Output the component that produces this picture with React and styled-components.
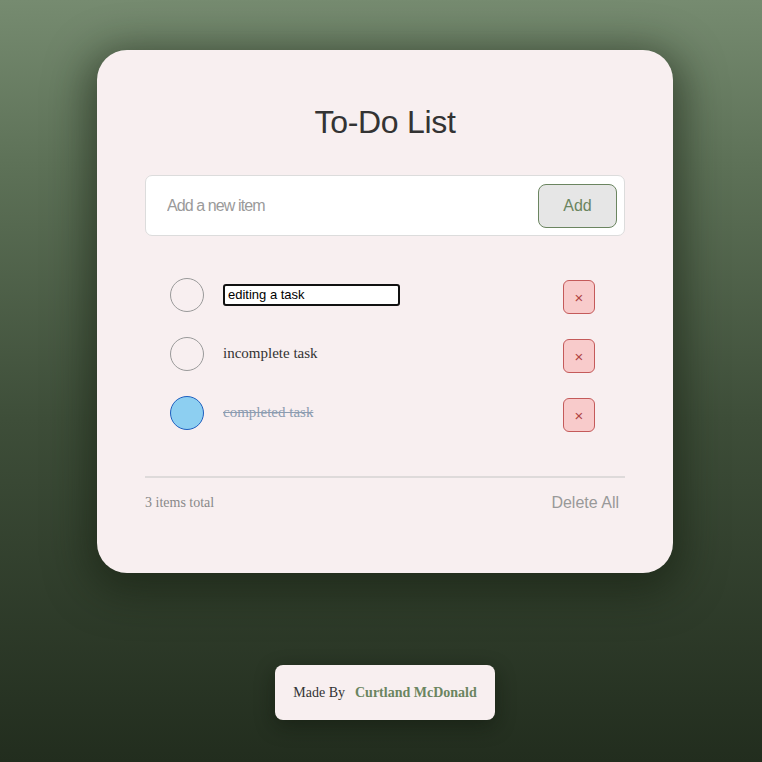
import React, { useState } from 'react';
import styled, { createGlobalStyle } from 'styled-components';

const GlobalStyle = createGlobalStyle`
    html, body {
        margin: 0;
        padding: 0;
    }
    body {
        min-height: 762px;
        background: linear-gradient(180deg, #768b70 0%, #5d7157 22%, #3e4e39 55%, #222d1e 100%);
        font-family: 'Liberation Serif', 'Times New Roman', serif;
    }
`;

const Page = styled.div`
    display: flex;
    flex-direction: column;
    align-items: center;
    padding: 50px 0 0 8px;
    min-height: 762px;
    box-sizing: border-box;
`;

const Card = styled.div`
    width: 576px;
    box-sizing: border-box;
    padding: 54px 48px 60px;
    background: #f8eff0;
    border-radius: 30px;
    box-shadow: 0 10px 40px 10px rgba(20, 30, 15, 0.55);
`;

const Title = styled.h1`
    margin: 0 0 34px;
    text-align: center;
    font-family: 'Liberation Sans', Arial, sans-serif;
    font-weight: 400;
    font-size: 32px;
    letter-spacing: -0.3px;
    color: #333;
`;

const InputBar = styled.form`
    display: flex;
    align-items: center;
    height: 61px;
    box-sizing: border-box;
    padding: 0 7px 0 21px;
    background: #fff;
    border: 1px solid #dcdcdc;
    border-radius: 7px;
`;

const NewItem = styled.input`
    flex: 1;
    border: none;
    outline: none;
    background: transparent;
    font-family: 'Liberation Sans', Arial, sans-serif;
    font-size: 16px;
    letter-spacing: -0.9px;
    color: #333;
    padding: 0;

    &::placeholder {
        color: #9a9a9a;
    }
`;

const AddButton = styled.button`
    width: 79px;
    height: 44px;
    background: #e6e6e6;
    border: 1px solid #6b8560;
    border-radius: 8px;
    color: #6b8560;
    font-family: 'Liberation Sans', Arial, sans-serif;
    font-size: 16px;
    cursor: pointer;
`;

const List = styled.ul`
    list-style: none;
    margin: 0;
    padding: 29px 0 0;
`;

const Row = styled.li`
    display: flex;
    align-items: center;
    height: 59px;
    padding: 0 30px 0 25px;
`;

const Check = styled.button`
    width: 34px;
    height: 34px;
    flex: none;
    padding: 0;
    border-radius: 50%;
    border: 1px solid ${(p) => (p.$done ? '#1f5fbf' : '#9a9a9a')};
    background: ${(p) => (p.$done ? '#8dcff1' : 'transparent')};
    cursor: pointer;
`;

const Label = styled.span`
    flex: 1;
    margin-left: 19px;
    font-size: 15px;
    color: ${(p) => (p.$done ? '#8c9cb0' : '#333')};
    text-decoration: ${(p) => (p.$done ? 'line-through' : 'none')};
`;

const EditBox = styled.div`
    flex: 1;
    margin-left: 19px;
`;

const EditInput = styled.input`
    width: 177px;
    height: 22px;
    box-sizing: border-box;
    border: 2px solid #111;
    border-radius: 3px;
    padding: 0 3px;
    font-family: 'Liberation Sans', Arial, sans-serif;
    font-size: 13px;
    color: #000;
    outline: none;
    background: #fff;
`;

const DeleteButton = styled.button`
    width: 32px;
    height: 34px;
    flex: none;
    margin-top: 5px;
    padding: 0;
    background: #f8cbcb;
    border: 1px solid #c45a5a;
    border-radius: 6px;
    color: #b04444;
    font-family: 'Liberation Sans', Arial, sans-serif;
    font-size: 15px;
    line-height: 1;
    cursor: pointer;
`;

const Divider = styled.hr`
    margin: 34px 0 0;
    border: none;
    height: 2px;
    background: #dedada;
`;

const Footer = styled.div`
    display: flex;
    justify-content: space-between;
    align-items: center;
    margin-top: 15px;
    height: 20px;
`;

const Count = styled.span`
    font-size: 14px;
    color: #888;
`;

const DeleteAll = styled.button`
    background: none;
    border: none;
    padding: 0 6px;
    font-family: 'Liberation Sans', Arial, sans-serif;
    font-size: 16px;
    color: #999;
    cursor: pointer;
`;

const Credit = styled.div`
    display: flex;
    align-items: center;
    justify-content: center;
    gap: 10px;
    margin-top: 92px;
    width: 220px;
    height: 55px;
    box-sizing: border-box;
    background: #f8eff0;
    border-radius: 8px;
    box-shadow: 0 6px 20px rgba(10, 18, 8, 0.45);
    font-size: 14px;
    color: #333;
`;

const Author = styled.span`
    font-weight: 700;
    color: #6b8560;
`;

const initialTasks = [
    { id: 1, text: 'editing a task', done: false, editing: true },
    { id: 2, text: 'incomplete task', done: false, editing: false },
    { id: 3, text: 'completed task', done: true, editing: false },
];

export default function App() {
    const [tasks, setTasks] = useState(initialTasks);
    const [draft, setDraft] = useState('');

    const toggle = (id) =>
        setTasks((prev) => prev.map((t) => (t.id === id ? { ...t, done: !t.done } : t)));

    const remove = (id) => setTasks((prev) => prev.filter((t) => t.id !== id));

    const add = (e) => {
        e.preventDefault();
        if (!draft.trim()) return;
        setTasks((prev) => [...prev, { id: Date.now(), text: draft, done: false, editing: false }]);
        setDraft('');
    };

    return (
        <Page>
            <GlobalStyle />
            <Card>
                <Title>To-Do List</Title>
                <InputBar onSubmit={add}>
                    <NewItem
                        placeholder="Add a new item"
                        value={draft}
                        onChange={(e) => setDraft(e.target.value)}
                    />
                    <AddButton type="submit">Add</AddButton>
                </InputBar>

                <List>
                    {tasks.map((task) => (
                        <Row key={task.id}>
                            <Check $done={task.done} onClick={() => toggle(task.id)} />
                            {task.editing ? (
                                <EditBox>
                                    <EditInput
                                        value={task.text}
                                        onChange={(e) =>
                                            setTasks((prev) =>
                                                prev.map((t) =>
                                                    t.id === task.id ? { ...t, text: e.target.value } : t
                                                )
                                            )
                                        }
                                    />
                                </EditBox>
                            ) : (
                                <Label $done={task.done}>{task.text}</Label>
                            )}
                            <DeleteButton onClick={() => remove(task.id)}>×</DeleteButton>
                        </Row>
                    ))}
                </List>

                <Divider />
                <Footer>
                    <Count>{tasks.length} items total</Count>
                    <DeleteAll onClick={() => setTasks([])}>Delete All</DeleteAll>
                </Footer>
            </Card>

            <Credit>
                Made By <Author>Curtland McDonald</Author>
            </Credit>
        </Page>
    );
}
